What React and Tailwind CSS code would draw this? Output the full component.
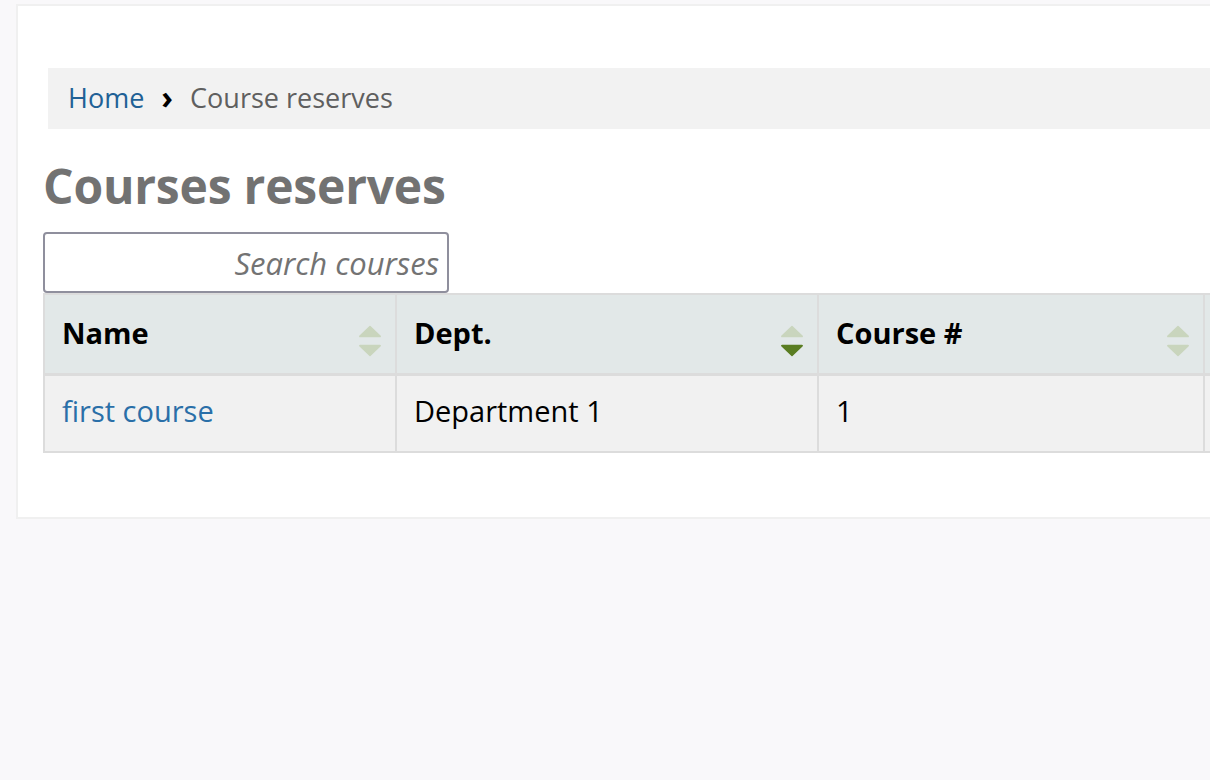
import React from 'react';

function SortIcon({ active }) {
  const up = '#c9d5bd';
  const down = active === 'desc' ? '#5a7d22' : '#c9d5bd';
  return (
    <svg width="24" height="32" viewBox="0 0 24 32" className="mt-[14px] shrink-0">
      <path d="M12 1.5 L22 11 Q22.5 11.5 21.8 11.5 L2.2 11.5 Q1.5 11.5 2 11 Z" fill={up} strokeLinejoin="round" stroke={up} strokeWidth="1.5" />
      <path d="M12 30.5 L22 21 Q22.5 20.5 21.8 20.5 L2.2 20.5 Q1.5 20.5 2 21 Z" fill={down} strokeLinejoin="round" stroke={down} strokeWidth="1.5" />
    </svg>
  );
}

const columns = [
  { label: 'Name', width: 'w-[352px]' },
  { label: 'Dept.', width: 'w-[422px]', sort: 'desc' },
  { label: 'Course #', width: 'w-[386px]' },
  { label: '', width: 'w-[300px]' },
];

export default function App() {
  return (
    <div className="min-h-[780px] w-[1210px] overflow-hidden bg-[#f9f8fa] pt-[4px] pl-[16px] font-['Open_Sans','Noto_Sans',sans-serif]">
      <div className="w-[1400px] border-2 border-r-0 border-[#f0f0f0] bg-white pl-[25px] pt-[62px] pb-[64px]">
        {/* Breadcrumb */}
        <nav className="ml-[5px] flex h-[61px] items-center bg-[#f2f2f2] pl-[20px] text-[27px]">
          <a href="#" className="text-[#1f6196]">Home</a>
          <span className="mx-[17px] -mt-[3px] text-[32px] font-bold leading-none text-black">›</span>
          <span className="text-[#5f5f5f]">Course reserves</span>
        </nav>

        <h1 className="mt-[26px] text-[48px] font-bold leading-[62px] tracking-[-0.2px] text-[#727272]">Courses reserves</h1>

        <div className="mt-[15px]">
          <input
            type="text"
            placeholder="Search courses"
            className="h-[61px] w-[406px] rounded-[4px] border-2 border-[#8f8f9d] bg-white px-[8px] text-right text-[31px] italic placeholder:text-[#737373] outline-none"
          />
        </div>

        <table className="table-fixed w-[1460px] border-collapse text-[29px] text-black">
          <thead>
            <tr className="bg-[#e2e8e8]">
              {columns.map((col, i) => (
                <th
                  key={i}
                  className={`${col.width} h-[80px] border-2 border-[#dcdcdc] border-b-[3px] pl-[17px] pr-[13px] text-left font-bold`}
                >
                  <div className="flex items-center justify-between">
                    <span className="-mt-[3px]">{col.label}</span>
                    <SortIcon active={col.sort} />
                  </div>
                </th>
              ))}
            </tr>
          </thead>
          <tbody>
            <tr className="bg-[#f1f1f1]">
              <td className="h-[78px] border-2 border-[#dcdcdc] pb-[5px] pl-[17px]">
                <a href="#" className="text-[#2a6fa8]">first course</a>
              </td>
              <td className="border-2 border-[#dcdcdc] pb-[5px] pl-[17px]">Department 1</td>
              <td className="border-2 border-[#dcdcdc] pb-[5px] pl-[17px]">1</td>
              <td className="border-2 border-[#dcdcdc] pb-[5px] pl-[17px]"></td>
            </tr>
          </tbody>
        </table>
      </div>
    </div>
  );
}
